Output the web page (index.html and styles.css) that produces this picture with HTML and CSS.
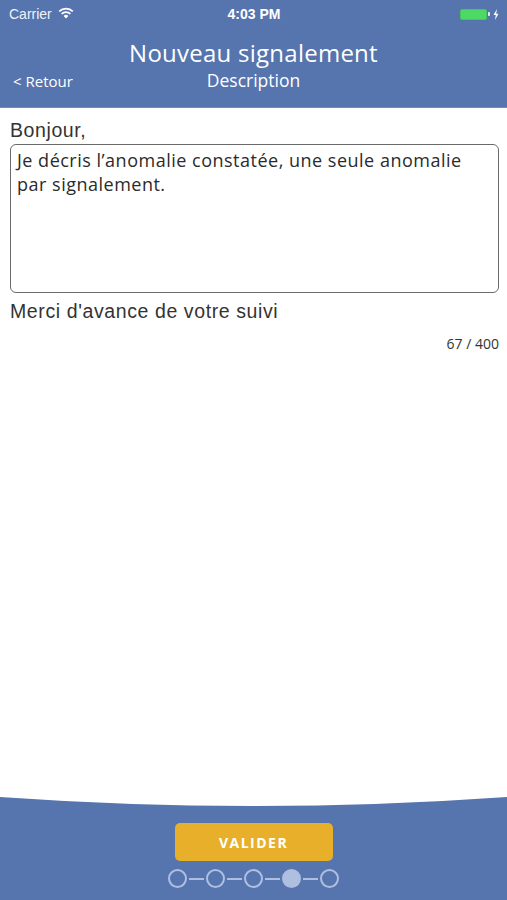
FILE: index.html
```html
<!DOCTYPE html>
<html lang="fr">
<head>
<meta charset="utf-8">
<title>Nouveau signalement</title>
<link rel="stylesheet" href="styles.css">
</head>
<body>
<div class="screen">
  <header class="header">
    <div class="status">
      <div class="status-left">
        <span class="carrier">Carrier</span>
        <svg class="wifi" width="16" height="12" viewBox="0 0 16 12">
          <path d="M8 11.5 L5.6 8.9 A3.4 3.4 0 0 1 10.4 8.9 Z" fill="#fff"/>
          <path d="M3.6 6.9 A6.3 6.3 0 0 1 12.4 6.9" stroke="#fff" stroke-width="1.8" fill="none"/>
          <path d="M1.2 4.4 A9.6 9.6 0 0 1 14.8 4.4" stroke="#fff" stroke-width="1.8" fill="none"/>
        </svg>
      </div>
      <span class="time">4:03 PM</span>
      <div class="status-right">
        <span class="battery"><span class="battery-fill"></span></span>
        <span class="battery-tip"></span>
        <svg class="bolt" width="6" height="11" viewBox="0 0 6 11"><path d="M4 0 L0.5 6 H2.8 L2 11 L5.5 4.8 H3.2 Z" fill="#fff"/></svg>
      </div>
    </div>
    <div class="title">Nouveau signalement</div>
    <div class="subrow">
      <span class="back">&lt; Retour</span>
      <span class="subtitle">Description</span>
      <span class="spacer"></span>
    </div>
  </header>
  <main class="content">
    <p class="greeting">Bonjour,</p>
    <div class="textbox">Je décris l’anomalie constatée, une seule anomalie par signalement.</div>
    <p class="thanks">Merci d'avance de votre suivi</p>
    <p class="counter">67 / 400</p>
  </main>
  <footer class="footer">
    <svg class="curve" width="507" height="10" viewBox="0 0 507 10" preserveAspectRatio="none"><path d="M0 0 H507 Q253.5 18 0 0 Z" fill="#fff"/></svg>
    <button class="validate">VALIDER</button>
    <div class="steps">
      <span class="dot"></span><span class="line"></span>
      <span class="dot"></span><span class="line"></span>
      <span class="dot"></span><span class="line"></span>
      <span class="dot active"></span><span class="line"></span>
      <span class="dot"></span>
    </div>
  </footer>
</div>
</body>
</html>
```

FILE: styles.css
```css
* { box-sizing: border-box; }
html, body { margin: 0; padding: 0; }
body { width: 507px; height: 900px; overflow: hidden; background: #fff; font-family: "Open Sans", sans-serif; }
.screen { display: flex; flex-direction: column; height: 900px; }

.header { background: #5674ae; color: #fff; height: 108px; border-bottom: 1px solid #6f8bc0; }
.status { height: 28px; display: flex; align-items: center; justify-content: space-between; padding: 0 8px 0 9px; position: relative; }
.status-left { display: flex; align-items: center; gap: 6px; width: 120px; }
.carrier { font-family: "Liberation Sans", sans-serif; font-size: 14px; color: #eef2fa; }
.wifi { margin-top: -2px; }
.time { font-family: "Liberation Sans", sans-serif; font-size: 14px; font-weight: bold; }
.status-right { display: flex; align-items: center; justify-content: flex-end; width: 120px; }
.battery { width: 27px; height: 11px; border-radius: 2px; background: #4cd964; border: 1px solid #49c45d; }
.battery-tip { width: 2px; height: 4px; background: #dfe6f2; margin-left: 1px; border-radius: 0 1px 1px 0; }
.bolt { margin-left: 3px; }

.title { text-align: center; font-size: 24px; line-height: 30px; margin-top: 10px; letter-spacing: 0.25px; }
.subrow { display: flex; align-items: center; justify-content: space-between; padding: 0 13px; margin-top: -1px; }
.back, .spacer { width: 80px; }
.back { font-size: 15px; padding-top: 2px; }
.subtitle { font-size: 17.5px; line-height: 26px; }

.content { flex: 1; padding: 11px 8px 0 10px; color: #333; }
.greeting, .thanks { margin: 0; font-family: "Liberation Sans", sans-serif; font-size: 19.5px; line-height: 23px; letter-spacing: 0.6px; }
.textbox { margin-top: 2px; height: 149px; border: 1.5px solid #6a6a6a; border-radius: 6px; padding: 3px 20px 3px 6px; font-size: 18px; line-height: 24px; letter-spacing: 0.5px; color: #2b2b2b; }
.thanks { margin-top: 7px; }
.counter { margin: 11px 0 0; text-align: right; font-size: 14px; color: #333; }

.footer { background: #5674ae; height: 103px; display: flex; flex-direction: column; align-items: center; }
.curve { display: block; width: 100%; height: 10px; }
.validate { margin-top: 16px; width: 158px; height: 38px; border: none; border-radius: 5px; background: #e8b02a; color: #fff; font-family: "Open Sans", sans-serif; font-weight: bold; font-size: 14px; letter-spacing: 1.5px; }
.steps { display: flex; align-items: center; margin-top: 8px; }
.dot { width: 19px; height: 19px; border-radius: 50%; border: 2px solid #aebfe0; }
.dot.active { background: #aebfe0; }
.line { width: 15px; height: 2px; background: #aebfe0; margin: 0 2px; }
```
